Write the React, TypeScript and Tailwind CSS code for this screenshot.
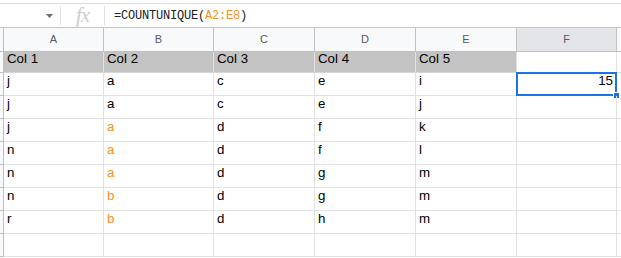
import React from "react";

const cols = [
  { key: "A", w: "w-[100px]" },
  { key: "B", w: "w-[110px]" },
  { key: "C", w: "w-[101px]" },
  { key: "D", w: "w-[101px]" },
  { key: "E", w: "w-[101px]" },
  { key: "F", w: "w-[100px]" },
];

const header = ["Col 1", "Col 2", "Col 3", "Col 4", "Col 5"];

const rows: string[][] = [
  ["j", "a", "c", "e", "i"],
  ["j", "a", "c", "e", "j"],
  ["j", "a", "d", "f", "k"],
  ["n", "a", "d", "f", "l"],
  ["n", "a", "d", "g", "m"],
  ["n", "b", "d", "g", "m"],
  ["r", "b", "d", "h", "m"],
  ["", "", "", "", ""],
];

// rows 3..7 in column B are highlighted orange
const isOrange = (r: number, c: number) => c === 1 && r >= 2 && r <= 6;

export default function App() {
  return (
    <div className="w-[621px] h-[258px] overflow-hidden bg-white font-['Liberation_Sans',Arial,sans-serif] text-[13.3px] text-black">
      {/* Formula bar */}
      <div className="h-[28px] pt-[3px]">
        <div className="h-[25px] border-t border-b border-[#dadce0] border-b-[#c7c7c7] flex items-center">
          <div className="w-[60px] h-full flex items-center justify-end pr-[7px]">
            <svg width="7" height="4" viewBox="0 0 7 4">
              <path d="M0 0h7L3.5 4z" fill="#6b6b6b" />
            </svg>
          </div>
          <div className="w-px h-[19px] bg-[#e0e0e0]" />
          <div className="w-[43px] h-full flex items-center justify-center">
            <span className="font-['Liberation_Serif',serif] italic text-[21px] text-[#cdcdcd] leading-none tracking-[-1px]">
              fx
            </span>
          </div>
          <div className="w-px h-[19px] bg-[#e0e0e0]" />
          <div className="pl-[9px] font-['Liberation_Mono',monospace] text-[12px] tracking-[-0.2px] text-[#202124]">
            =COUNTUNIQUE(<span className="text-[#f6921e]">A2:E8</span>)
          </div>
        </div>
      </div>

      {/* Column letters */}
      <div className="flex h-[24px]">
        <div className="w-[4px] h-full bg-[#f8f9fa] border-r border-b border-[#c0c0c0]" />
        {cols.map((c) => (
          <div
            key={c.key}
            className={`${c.w} shrink-0 h-full flex items-center justify-center border-r border-b border-[#c0c0c0] text-[11px] text-[#575a5e] ${c.key === "F" ? "bg-[#e3e5e8]" : "bg-[#f8f9fa]"}`}
          >
            {c.key}
          </div>
        ))}
        <div className="flex-1 h-full bg-[#f8f9fa] border-b border-[#c0c0c0]" />
      </div>

      {/* Header row */}
      <div className="flex h-[21px]">
        <div className="w-[4px] h-full bg-[#f8f9fa] border-r border-b border-[#c0c0c0]" />
        {cols.map((c, i) => (
          <div
            key={c.key}
            className={`${c.w} shrink-0 h-full flex items-end pb-[3px] pl-[3px] border-r border-b ${i < 5 ? "bg-[#c3c3c3] border-[#e2e2e2] border-b-[#d6d6d6]" : "bg-white border-[#e2e2e2]"}`}
          >
            {header[i] ?? ""}
          </div>
        ))}
        <div className="flex-1 h-full border-b border-[#e2e2e2]" />
      </div>

      {/* Data rows */}
      {rows.map((row, r) => (
        <div key={r} className="flex h-[23px]">
          <div className="w-[4px] h-full bg-[#f8f9fa] border-r border-b border-[#c0c0c0]" />
          {cols.map((c, i) => (
            <div
              key={c.key}
              className={`${c.w} shrink-0 h-full relative flex items-end pb-[4px] px-[3px] border-r border-b border-[#e2e2e2] ${i === 5 ? "justify-end" : ""} ${isOrange(r, i) ? "text-[#f6921e]" : ""}`}
            >
              {i < 5 ? row[i] : r === 0 ? "15" : ""}
              {i === 5 && r === 0 && (
                <>
                  <div className="absolute -left-px -top-px -right-px -bottom-px border-2 border-[#1a73e8]" />
                  <div className="absolute -right-[4px] -bottom-[4px] w-[7px] h-[7px] bg-[#1a73e8] border border-white" />
                </>
              )}
            </div>
          ))}
          <div className="flex-1 h-full border-b border-[#e2e2e2]" />
        </div>
      ))}
    </div>
  );
}
